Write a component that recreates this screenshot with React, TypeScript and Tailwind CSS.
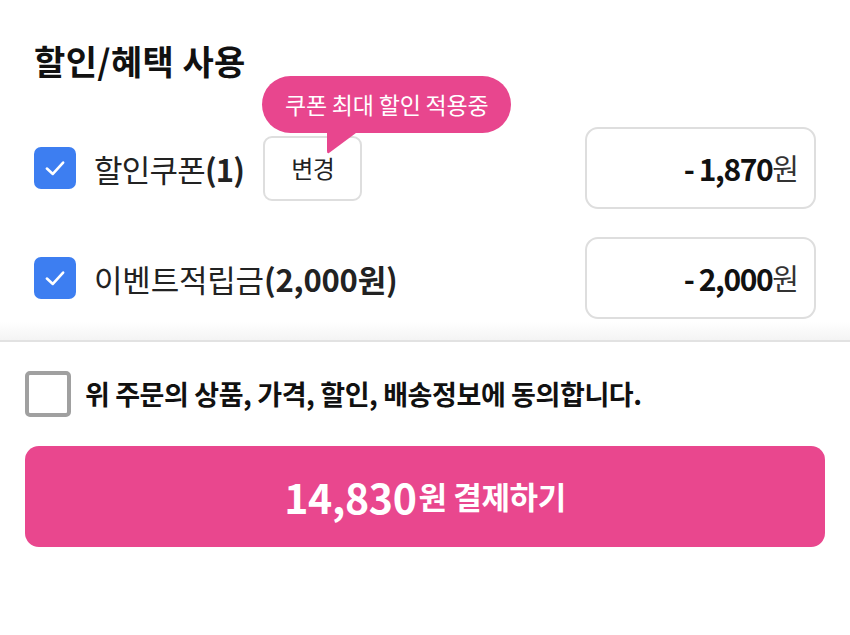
import React from "react";

const FONT = { fontFamily: '"Noto Sans CJK KR", "Noto Sans", sans-serif' };

function BlueCheck() {
  return (
    <div className="flex h-[42px] w-[42px] shrink-0 items-center justify-center rounded-[7px] bg-[#3D7EF1]">
      <svg width="26" height="26" viewBox="0 0 24 24" fill="none">
        <path d="M4.5 12.5 L10 17.5 L19.5 7" stroke="white" strokeWidth="2.4" strokeLinecap="round" strokeLinejoin="round" />
      </svg>
    </div>
  );
}

function AmountBox({ value }: { value: string }) {
  return (
    <div className="flex h-[82px] w-[231px] items-center justify-end rounded-[13px] border-2 border-[#dedede] pr-[16px]">
      <span className="text-[30px] font-bold tracking-[-1.4px] text-[#111]">{value}</span>
      <span className="text-[29px] font-normal tracking-[-1px] text-[#333]">원</span>
    </div>
  );
}

export default function App() {
  return (
    <div className="w-full bg-white" style={FONT}>
      <div className="px-[34px] pt-[41px]">
        <h2 className="text-[34px] font-bold leading-[40px] tracking-[0.4px] text-[#111]">할인/혜택 사용</h2>

        <div className="mt-[46px] flex items-center justify-between">
          <div className="flex items-center">
            <BlueCheck />
            <span className="ml-[18px] text-[31px] leading-none tracking-[-0.8px] text-[#222]">
              할인쿠폰<span className="font-bold">(1)</span>
            </span>
            <div className="relative ml-[19px]">
              <button className="flex h-[65px] w-[99px] items-center justify-center rounded-[9px] border-2 border-[#dedede] bg-white text-[24px] tracking-[-0.5px] text-[#222]">
                변경
              </button>
              <div className="absolute left-[-1px] top-[-60px] z-10">
                <div className="relative flex h-[57px] w-[249px] items-center justify-center rounded-full bg-[#E8468E] text-[23px] tracking-[-0.2px] text-white">
                  쿠폰 최대 할인 적용중
                  <svg className="absolute left-[64px] top-[54px]" width="34" height="25" viewBox="0 0 34 25">
                    <path d="M1 0 L34 0 L3 23 Q1 24 1 21 Z" fill="#E8468E" />
                  </svg>
                </div>
              </div>
            </div>
          </div>
          <AmountBox value="- 1,870" />
        </div>

        <div className="mt-[28px] flex items-center justify-between">
          <div className="flex items-center">
            <BlueCheck />
            <span className="ml-[18px] text-[31px] leading-none tracking-[-0.2px] text-[#222]">
              이벤트적립금<span className="font-bold">(2,000원)</span>
            </span>
          </div>
          <AmountBox value="- 2,000" />
        </div>
      </div>

      <div className="mt-[3px] h-[18px] bg-gradient-to-b from-white to-[#f4f4f4]" />
      <div className="h-[2px] bg-[#e2e2e2]" />

      <div className="px-[25px]">
        <div className="mt-[29px] flex items-center">
          <div className="h-[46px] w-[46px] shrink-0 rounded-[5px] border-[4px] border-[#a0a0a0] bg-white" />
          <span className="ml-[14px] text-[27px] font-bold tracking-[-0.4px] text-[#111]">
            위 주문의 상품, 가격, 할인, 배송정보에 동의합니다.
          </span>
        </div>

        <button className="mt-[29px] flex h-[101px] w-full items-center justify-center rounded-[14px] bg-[#E9478E] text-white">
          <span className="text-[41px] font-bold tracking-[-0.3px]">14,830</span>
          <span className="ml-[2px] text-[31px] font-bold tracking-[-0.4px]">원 결제하기</span>
        </button>
      </div>
      <div className="h-[89px]" />
    </div>
  );
}
